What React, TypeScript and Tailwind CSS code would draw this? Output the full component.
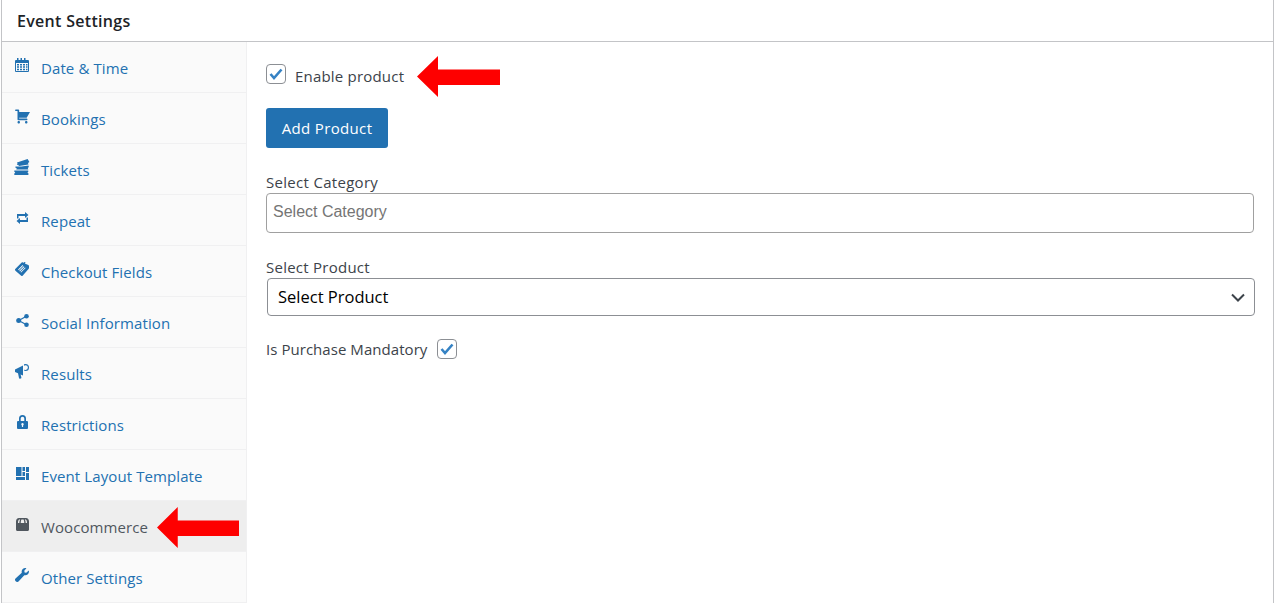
const font = "[font-family:'Open_Sans',sans-serif]";

function Calendar() {
  return (
    <svg viewBox="0 0 14 14" className="h-[14px] w-[14px]" fill="currentColor">
      <path fillRule="evenodd" d="M0 2h2V0h1.500v2h2V0H7v2h2V0h1.500v2H13a1 1 0 0 1 1 1v10a1 1 0 0 1-1 1H1a1 1 0 0 1-1-1V3a1 1 0 0 1 1-1zm1 3v8h12V5zm1 1h2v1.500H2zm3 0h2v1.500H5zm3 0h2v1.500H8zm3 0h1.500v1.500H11zM2 8.300h2v1.500H2zm3 0h2v1.500H5zm3 0h2v1.500H8zm3 0h1.500v1.500H11zM2 10.700h2v1.500H2zm3 0h2v1.500H5zm3 0h2v1.500H8zm3 0h1.500v1.500H11z" />
    </svg>
  );
}

function Cart() {
  return (
    <svg viewBox="1 2 18 17" className="h-[15px] w-[15px]" fill="currentColor">
      <path d="M6 13h9c.55 0 1 .45 1 1s-.45 1-1 1H5c-.55 0-1-.45-1-1V4H2c-.55 0-1-.45-1-1s.45-1 1-1h3c.55 0 1 .45 1 1v2h13l-4 7H6v1zm-.5 3c.83 0 1.500.67 1.500 1.500S6.330 19 5.500 19 4 18.330 4 17.500 4.670 16 5.500 16zm9 0c.83 0 1.500.67 1.500 1.500s-.67 1.500-1.500 1.500-1.500-.67-1.500-1.500.67-1.500 1.500-1.500z" />
    </svg>
  );
}

function Tickets() {
  return (
    <svg viewBox="0 0 16 16" className="h-[16px] w-[16px]" fill="currentColor">
      <path d="M3 3.600 13.600 0l1.800 3-1.400.9.500 1.500-9.500 1.700-.9-1.400-1.300.2.700-1.100z" />
      <path d="M1.500 7.600h6l7-1 .3 1.500-1 .9.500 1.600H2.300l.5-1.200-1.500-.8z" />
      <path d="M.3 11.500h13.900l.2 1.100-1 .8 1 .9V16H.3v-1.500l1-.9-1-.8z" />
    </svg>
  );
}

function Repeat() {
  return (
    <svg viewBox="0 0 13 12" className="h-[12px] w-[13px]" fill="currentColor">
      <path d="M1 2h8V0l3.500 3L9 6V4H2.500v2.500H1zM12 10H4v2L.5 9 4 6v2h6.500V5.500H12z" />
    </svg>
  );
}

function Feedback() {
  return (
    <svg viewBox="0 0 15 15" className="h-[15px] w-[15px]" fill="currentColor">
      <path fillRule="evenodd" d="M0 7.300 6.700.6C7 .3 7.500.2 8 .4l1 .4.200-.6c.3-.3.900-.2 1.100.1.200.3.100.7-.2.900l-.3.200 3.500 1.500c.5.200.7.600.7 1.100v1.800c0 .5-.2.900-.5 1.200L7.600 13.800c-.4.400-1 .4-1.400 0L.4 8.700c-.4-.4-.4-1-.4-1.400zm7.600-4.200-4.500 4.500.6.600 4.500-4.500zm1.200 1.200-4.500 4.500.6.600 4.500-4.500zm1.200 1.200-4.500 4.500.6.600 4.500-4.500z" />
    </svg>
  );
}

function Share() {
  return (
    <svg viewBox="0 0 13 13" className="h-[13px] w-[13px]" fill="currentColor">
      <circle cx="2.700" cy="6.500" r="2.500" />
      <circle cx="10.500" cy="2.300" r="2.300" />
      <circle cx="10.500" cy="10.700" r="2.300" />
      <path d="M2.700 6.500 10.500 2.300M2.700 6.500l7.800 4.200" stroke="currentColor" strokeWidth="1.300" />
    </svg>
  );
}

function Megaphone() {
  return (
    <svg viewBox="0 0 14 15" className="h-[15px] w-[14px]" fill="currentColor">
      <path fillRule="evenodd" d="M0 5.500 8 1.500v10L5.600 10.400l.8 3.100c.1.500-.2.900-.6 1l-.9.200c-.4.100-.8-.2-.9-.6L3 9.300 0 8zM10.500 0a3.500 3.500 0 1 1 0 7c-.6 0-1.100-.1-1.500-.4V5.400c.4.400.9.600 1.500.6a2.300 2.300 0 0 0 0-4.800c-.6 0-1.100.2-1.500.6V.4c.4-.3.900-.4 1.500-.4z" />
    </svg>
  );
}

function Lock() {
  return (
    <svg viewBox="0 0 11 14" className="h-[14px] w-[11px]" fill="currentColor">
      <path fillRule="evenodd" d="M2 6V3.500a3.500 3.500 0 0 1 7 0V6h1a1 1 0 0 1 1 1v6a1 1 0 0 1-1 1H1a1 1 0 0 1-1-1V7a1 1 0 0 1 1-1zm1.700 0h3.600V3.500a1.800 1.800 0 0 0-3.600 0zM5.500 8a1.300 1.300 0 0 0-.6 2.400V12h1.200v-1.600A1.300 1.300 0 0 0 5.500 8z" />
    </svg>
  );
}

function LayoutIcon() {
  return (
    <svg viewBox="0 0 13 13" className="h-[13px] w-[13px]" fill="currentColor">
      <path d="M0 0h5.500v9H0zM0 10h9v3H0zM6.500 0H9v4H6.500zM6.500 5H9v4H6.500zM10 0h3v5h-3zM10 6h3v7h-3z" />
    </svg>
  );
}

function Store() {
  return (
    <svg viewBox="0 0 13 13" className="h-[13px] w-[13px]" fill="currentColor">
      <path fillRule="evenodd" d="M3 0h7c1.800 0 3 1.500 3 3.500v8c0 .9-.6 1.500-1.500 1.500h-10C.6 13 0 12.400 0 11.500v-8C0 1.500 1.200 0 3 0zM3.300 1.400C2.300 2 2 3 2 5h1.300c0-1.600.3-2.800.9-3.600zm5.500 0c.6.800.9 2 .9 3.600H11c0-2-.3-3-1.300-3.600zM5.400 1.400C5 2.200 4.700 3.400 4.700 5h3.600c0-1.600-.3-2.800-.7-3.600z" />
    </svg>
  );
}

function Wrench() {
  return (
    <svg viewBox="0 0 14 14" className="h-[14px] w-[14px]" fill="currentColor">
      <path d="M13.800 2.600c.4 1.300.1 2.700-.9 3.700-1 1-2.400 1.300-3.600.9L3.500 13.500c-.7.700-1.800.7-2.500 0l-.5-.5c-.7-.7-.7-1.800 0-2.500l6.300-5.800c-.4-1.200-.1-2.600.9-3.600 1-1 2.400-1.300 3.700-.9L9.300 2.800l.3 1.600 1.600.3z" />
    </svg>
  );
}

const tabs = [
  { label: "Date & Time", icon: <Calendar /> },
  { label: "Bookings", icon: <Cart /> },
  { label: "Tickets", icon: <Tickets /> },
  { label: "Repeat", icon: <Repeat /> },
  { label: "Checkout Fields", icon: <Feedback /> },
  { label: "Social Information", icon: <Share /> },
  { label: "Results", icon: <Megaphone /> },
  { label: "Restrictions", icon: <Lock /> },
  { label: "Event Layout Template", icon: <LayoutIcon /> },
  { label: "Woocommerce", icon: <Store />, active: true },
  { label: "Other Settings", icon: <Wrench /> },
];

function Check({ className }: { className: string }) {
  return (
    <span className={`flex h-5 w-5 shrink-0 items-center justify-center rounded-[4px] border border-[#8c8f94] bg-white ${className}`}>
      <svg viewBox="0 0 14 12" className="h-[12px] w-[14px]" fill="none" stroke="#3582c4" strokeWidth="2.600">
        <path d="M1.500 6 5 10 12.500 1.500" />
      </svg>
    </span>
  );
}

function Arrow({ className }: { className: string }) {
  return (
    <svg viewBox="0 0 83 41" className={`absolute h-[41px] ${className}`} fill="#fe0000" preserveAspectRatio="none">
      <path d="M0 20.500 21 0v13.500h62v15.500H21V41z" />
    </svg>
  );
}

export default function App() {
  return (
    <div className={`relative ml-px h-[603px] w-[1273px] overflow-hidden border-x border-[#c3c4c7] bg-white text-[15px] tracking-[0.1px] ${font}`}>
      <div className="flex h-[42px] items-center border-b border-[#c3c4c7] pl-[15px] text-[16px] font-semibold tracking-[0.3px] text-[#1d2327]">
        Event Settings
      </div>
      <div className="flex">
        <ul className="w-[245px] shrink-0 border-r border-[#f0f0f1] bg-[#fafafa]">
          {tabs.map((tab) => (
            <li
              key={tab.label}
              className={`flex h-[51px] items-center border-b border-[#f0f0f1] ${
                tab.active ? "bg-[#eeeeee] text-[#50575e]" : "text-[#2271b1]"
              }`}
            >
              <span className="flex w-[39px] shrink-0 justify-center pb-1 pl-px">{tab.icon}</span>
              <span className="pt-0.5">{tab.label}</span>
            </li>
          ))}
        </ul>
        <div className="min-w-0 flex-1 pl-[19px] pr-[18px] pt-[22px] text-[#3c434a]">
          <div className="flex h-5 items-center">
            <Check className="" />
            <span className="ml-[9px] pt-[5px] tracking-[0.2px]">Enable product</span>
          </div>
          <button className="mt-6 h-10 w-[122px] rounded-[3px] bg-[#2271b1] tracking-[0.35px] text-white">Add Product</button>
          <div className="mt-6 h-[21px] leading-5 tracking-[0.3px]">Select Category</div>
          <input
            placeholder="Select Category"
            className="h-10 w-[988px] rounded-[4px] border border-[#a0a0a0] px-1.5 pb-0.5 font-['Liberation_Sans',sans-serif] text-[16px] tracking-normal outline-none placeholder:text-[#757575]"
          />
          <div className="mt-6 h-[21px] leading-5 tracking-[0.25px]">Select Product</div>
          <div className="relative ml-px w-[988px]">
            <select className="h-[38px] w-full appearance-none rounded-[4px] border border-[#8c8f94] bg-white pl-[10px] text-[16.5px] tracking-normal text-black outline-none">
              <option>Select Product</option>
            </select>
            <svg viewBox="0 0 14 9" className="pointer-events-none absolute right-[10px] top-[15px] h-[9px] w-[14px]" fill="none" stroke="#3c434a" strokeWidth="2">
              <path d="M1 1.500 7 7.500 13 1.500" />
            </svg>
          </div>
          <div className="mt-[23px] flex h-5 items-center">
            <span className="tracking-[0.05px]">Is Purchase Mandatory</span>
            <Check className="ml-[10px]" />
          </div>
        </div>
      </div>
      <Arrow className="left-[415px] top-[56px] w-[83px]" />
      <Arrow className="left-[155px] top-[507px] w-[82px]" />
    </div>
  );
}
